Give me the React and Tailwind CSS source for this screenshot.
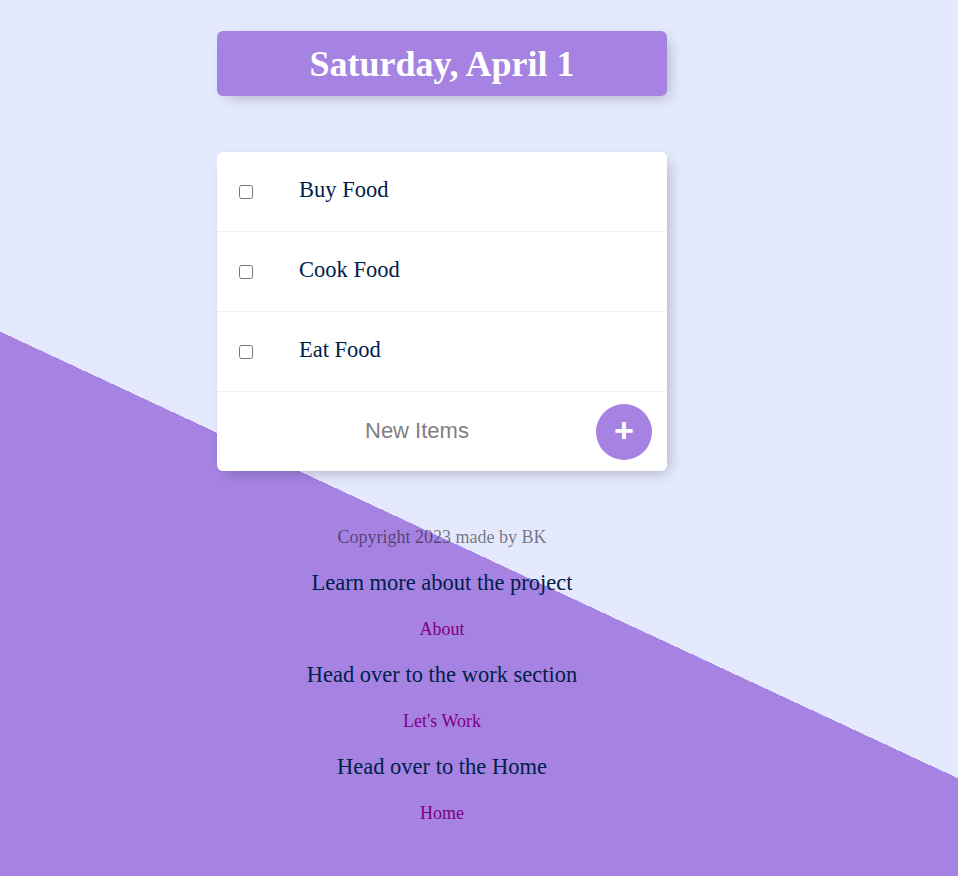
export default function App() {
  const items = ["Buy Food", "Cook Food", "Eat Food"];
  return (
    <div
      className="h-[876px] w-full overflow-hidden bg-[#E4E9FD] bg-[linear-gradient(25deg,#A683E3_41.16%,#E4E9FD_41.16%)] font-['Liberation_Serif',serif]"
    >
      <div className="w-[884px] flex flex-col items-center pt-[31px]">
        <div className="w-[450px] h-[65px] rounded-[6px] bg-[#A683E3] shadow-[5px_5px_15px_-5px_rgba(0,0,0,0.3)] flex items-center justify-center">
          <h1 className="text-white font-bold text-[36px] leading-none">Saturday, April 1</h1>
        </div>

        <div className="mt-[56px] w-[450px] rounded-[6px] bg-white shadow-[5px_5px_15px_-5px_rgba(0,0,0,0.3)]">
          {items.map((t) => (
            <div key={t} className="h-[80px] flex items-center border-b border-[#F1F1F1]">
              <input type="checkbox" className="ml-[22px] w-[14px] h-[14px] m-0" />
              <p className="ml-[46px] text-[22.5px] text-[#00204a] leading-none pb-[3px]">{t}</p>
            </div>
          ))}
          <div className="h-[79px] flex items-center">
            <span className="ml-[148px] text-[22px] text-[#808080] font-['Liberation_Sans',sans-serif] leading-none pb-[2px]">
              New Items
            </span>
            <div className="ml-[127px] w-[56px] h-[56px] rounded-full bg-[#A683E3] flex items-center justify-center">
              <span className="text-white text-[34px] font-bold leading-none font-['Liberation_Sans',sans-serif] pb-[3px]">+</span>
            </div>
          </div>
        </div>

        <div className="mt-[44px] flex flex-col items-center">
          <div className="h-[46px] flex items-center text-[18px] text-black/50 pb-[2px]">Copyright 2023 made by BK</div>
          <div className="h-[46px] flex items-center text-[22.5px] text-[#00204a] pb-[2px]">Learn more about the project</div>
          <div className="h-[46px] flex items-center text-[18px] text-[#800080] pb-[2px]">About</div>
          <div className="h-[46px] flex items-center text-[22.5px] text-[#00204a] pb-[2px]">Head over to the work section</div>
          <div className="h-[46px] flex items-center text-[18px] text-[#800080] pb-[2px]">Let's Work</div>
          <div className="h-[46px] flex items-center text-[22.5px] text-[#00204a] pb-[2px]">Head over to the Home</div>
          <div className="h-[46px] flex items-center text-[18px] text-[#800080] pb-[2px]">Home</div>
        </div>
      </div>
    </div>
  );
}
